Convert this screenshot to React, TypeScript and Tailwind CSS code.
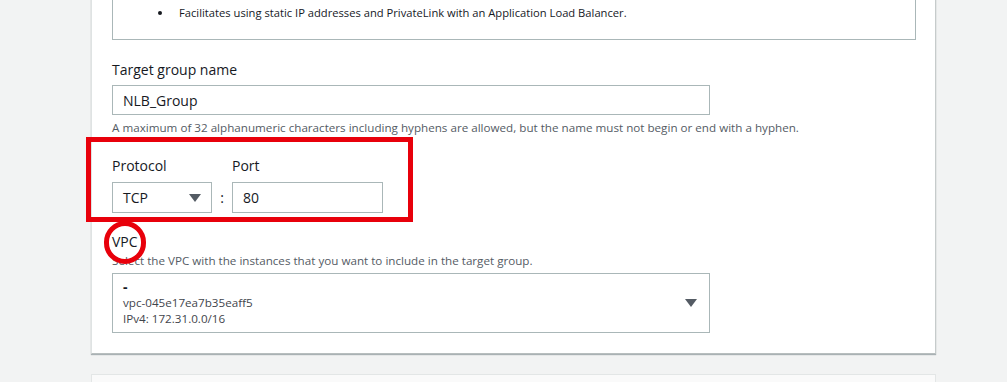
import React from "react";

function Caret() {
  return (
    <svg width="12" height="8" viewBox="0 0 12 8" className="shrink-0">
      <path d="M0 0 L12 0 L6 8 Z" fill="#545b64" />
    </svg>
  );
}

export default function App() {
  const vpc = ["-", "vpc-045e17ea7b35eaff5", "IPv4: 172.31.0.0/16"];

  return (
    <div
      className="relative h-[382px] w-[1007px] overflow-hidden bg-[#f2f3f3] text-[#16191f]"
      style={{ fontFamily: '"Open Sans", "Noto Sans", sans-serif' }}
    >
      {/* form card */}
      <div className="ml-[91px] w-[845px] border-r border-b border-l border-r-[#c6cbcb] border-b-[#b8bebe] border-l-[#dfe3e3] bg-white px-[20px] pb-[20px] shadow-[0_1px_1px_rgba(0,28,36,0.3)]">
        <div className="-mt-[8px] h-[48px] w-[804px] border border-[#aab7b8] pt-[11px]">
          <ul className="list-disc pl-[60px] text-[11.2px] leading-[18px]">
            <li className="pl-[6px]">
              Facilitates using static IP addresses and PrivateLink with an
              Application Load Balancer.
            </li>
          </ul>
        </div>

        <p className="mt-[20px] text-[14px] leading-[20px] font-medium">
          Target group name
        </p>
        <div className="mt-[5px] flex h-[30px] w-[598px] items-center border border-[#aab7b8] px-[10px] text-[14px]">
          NLB_Group
        </div>
        <p className="mt-[5px] text-[11.65px] leading-[16px] text-[#545b64]">
          A maximum of 32 alphanumeric characters including hyphens are
          allowed, but the name must not begin or end with a hyphen.
        </p>

        <div className="mt-[20px] flex items-end">
          <div>
            <p className="text-[14px] leading-[20px] font-medium">Protocol</p>
            <div className="mt-[6px] flex h-[31px] w-[100px] items-center justify-between border border-[#aab7b8] pr-[10px] pl-[10px] text-[14px]">
              TCP
              <Caret />
            </div>
          </div>
          <span className="flex h-[31px] w-[20px] items-center justify-center text-[14px]">
            :
          </span>
          <div>
            <p className="text-[14px] leading-[20px] font-medium">Port</p>
            <div className="mt-[6px] flex h-[31px] w-[151px] items-center border border-[#aab7b8] px-[10px] text-[14px]">
              80
            </div>
          </div>
        </div>

        <p className="mt-[19px] text-[14px] leading-[20px] font-medium">VPC</p>
        <p className="mt-[1px] text-[11.65px] leading-[16px] text-[#545b64]">
          Select the VPC with the instances that you want to include in the
          target group.
        </p>
        <div className="mt-[4px] flex h-[60px] w-[598px] items-center justify-between border border-[#aab7b8] pr-[12px] pl-[10px]">
          <div className="flex flex-col text-[11.65px] leading-[16px]">
            {vpc.map((line, i) => (
              <span
                key={line}
                className={i === 0 ? "text-[14px] font-bold" : "text-[#3f454c]"}
              >
                {line}
              </span>
            ))}
          </div>
          <Caret />
        </div>
      </div>

      {/* next card */}
      <div className="mt-[20px] ml-[91px] h-[40px] w-[845px] border-t border-r border-l border-[#e3e6e6] bg-[#fafafa]" />

      {/* annotations */}
      <div className="absolute top-[137px] left-[86px] h-[85px] w-[327px] border-[5px] border-[#e8000b]" />
      <div className="absolute top-[221px] left-[104px] h-[43px] w-[42px] rounded-full border-[5px] border-[#e8000b]" />
    </div>
  );
}
